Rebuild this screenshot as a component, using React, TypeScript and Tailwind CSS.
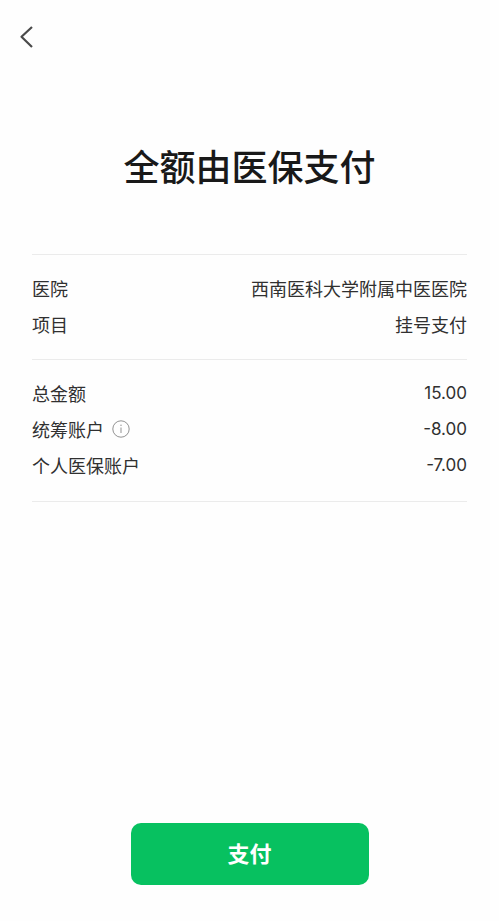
import type { ReactNode } from "react";

type RowProps = {
  label: ReactNode;
  children: ReactNode;
};

function Row({ label, children }: RowProps) {
  return (
    <div className="flex h-9 items-center justify-between">
      <dt className="flex items-center gap-2">{label}</dt>
      <dd>{children}</dd>
    </div>
  );
}

function Amount({ value }: { value: string }) {
  return <span className="block font-['Inter',sans-serif] text-[17px]">{value}</span>;
}

export default function App() {
  return (
    <div className="flex min-h-screen flex-col bg-[#fefefe] font-['Noto_Sans_CJK_SC',sans-serif] text-[#303030]">
      <header className="px-4 pt-6">
        <button type="button" aria-label="返回" className="block">
          <svg
            width="20"
            height="26"
            viewBox="0 0 20 26"
            fill="none"
            stroke="#4a4a4a"
            strokeWidth="2.2"
            strokeLinejoin="round"
          >
            <path d="M16 3 L5.5 12.7 L16 23" />
          </svg>
        </button>
      </header>

      <main className="flex flex-1 flex-col px-8">
        <h1 className="pt-[89px] text-center text-4xl leading-[52px] font-medium text-[#191919]">
          全额由医保支付
        </h1>

        <div className="mt-[63px] border-b border-[#ebebeb] text-[18px] leading-9">
          <dl className="border-t border-[#ebebeb] pt-[15px] pb-[17px]">
            <Row label="医院">西南医科大学附属中医医院</Row>
            <Row label="项目">挂号支付</Row>
          </dl>
          <dl className="border-t border-[#ebebeb] pt-[15px] pb-[18px]">
            <Row label="总金额">
              <Amount value="15.00" />
            </Row>
            <Row
              label={
                <>
                  统筹账户
                  <button type="button" aria-label="说明">
                    <svg width="18" height="18" viewBox="0 0 18 18" fill="none" stroke="#929292">
                      <circle cx="9" cy="9" r="8.2" />
                      <path d="M9 7.5v5.5" />
                      <circle cx="9" cy="5.3" r="0.7" fill="#929292" stroke="none" />
                    </svg>
                  </button>
                </>
              }
            >
              <Amount value="-8.00" />
            </Row>
            <Row label="个人医保账户">
              <Amount value="-7.00" />
            </Row>
          </dl>
        </div>
      </main>

      <footer className="flex justify-center pb-9">
        <button
          type="button"
          className="h-[62px] w-[238px] rounded-[10px] bg-[#07c160] pb-1 text-[22px] font-bold text-white"
        >
          支付
        </button>
      </footer>
    </div>
  );
}
